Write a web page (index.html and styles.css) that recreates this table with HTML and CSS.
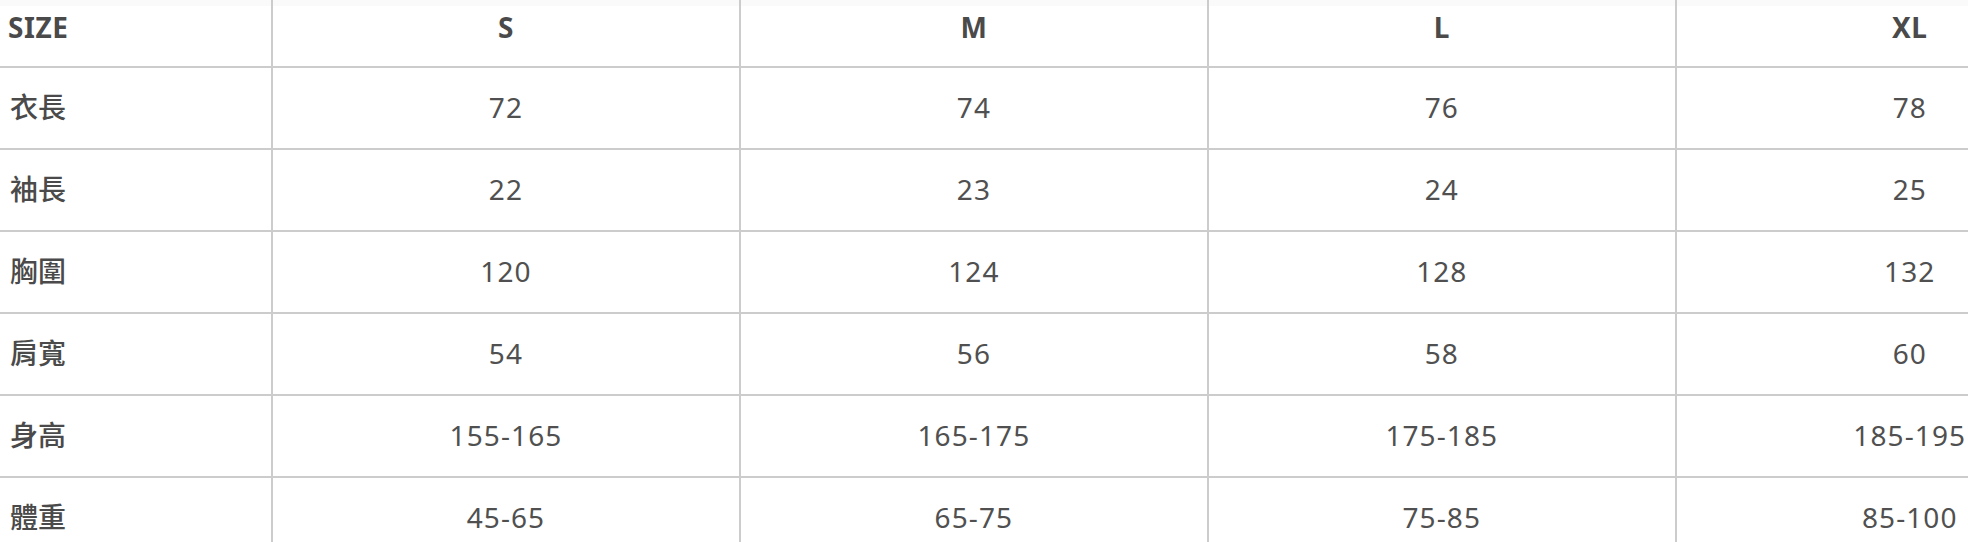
FILE: index.html
```html
<!DOCTYPE html>
<html lang="zh-Hant">
<head>
<meta charset="utf-8">
<title>Size chart</title>
<link rel="stylesheet" href="styles.css">
</head>
<body>
<div class="wrap">
<table class="size-table">
<colgroup>
<col class="c-label"><col class="c-a"><col class="c-b"><col class="c-a"><col class="c-b">
</colgroup>
<thead>
<tr><th class="label">SIZE</th><th>S</th><th>M</th><th>L</th><th>XL</th></tr>
</thead>
<tbody>
<tr><th class="label">衣長</th><td>72</td><td>74</td><td>76</td><td>78</td></tr>
<tr><th class="label">袖長</th><td>22</td><td>23</td><td>24</td><td>25</td></tr>
<tr><th class="label">胸圍</th><td>120</td><td>124</td><td>128</td><td>132</td></tr>
<tr><th class="label">肩寬</th><td>54</td><td>56</td><td>58</td><td>60</td></tr>
<tr><th class="label">身高</th><td>155-165</td><td>165-175</td><td>175-185</td><td>185-195</td></tr>
<tr><th class="label">體重</th><td>45-65</td><td>65-75</td><td>75-85</td><td>85-100</td></tr>
</tbody>
</table>
</div>
</body>
</html>
```
FILE: styles.css
```css
html, body {
  margin: 0;
  padding: 0;
  background: #fff;
}
body {
  overflow: hidden;
}
.wrap {
  width: 1968px;
  overflow: hidden;
}
.size-table {
  table-layout: fixed;
  border-collapse: separate;
  border-spacing: 0;
  width: 2145px;
  font-family: "Noto Sans", "Noto Sans CJK TC", sans-serif;
  font-size: 28px;
  color: #4a4a4a;
}
.c-label { width: 273px; }
.c-a { width: 467px; }
.c-b { width: 468px; }
.size-table th,
.size-table td {
  box-sizing: border-box;
  border-right: 2px solid #cccccc;
  border-bottom: 2px solid #cccccc;
  padding: 0;
  text-align: center;
  vertical-align: middle;
  line-height: 1.2;
}
.size-table td {
  font-weight: 400;
  height: 82px;
  letter-spacing: 1.1px;
  color: #505050;
}
.size-table thead th {
  height: 68px;
  font-weight: 700;
  letter-spacing: 0.6px;
  padding-bottom: 10px;
  background: linear-gradient(#fafafa 0, #fafafa 6px, #ffffff 6px);
}
.size-table th.label {
  text-align: left;
  padding-left: 8px;
  font-weight: 700;
}
.size-table tbody th.label {
  height: 82px;
  padding-left: 10px;
  font-weight: 500;
}
```
